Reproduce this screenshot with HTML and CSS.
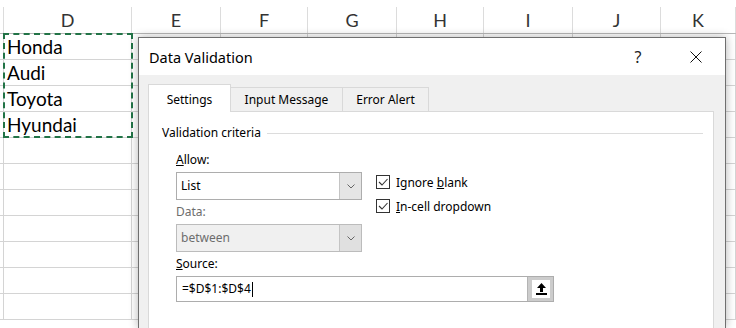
FILE: index.html
```html
<!DOCTYPE html>
<html lang="en">
<head>
    <meta charset="UTF-8">
    <title>Data Validation</title>
    <link rel="stylesheet" href="styles.css">
</head>
<body>
    <div class="sheet">
        <div class="row head">
            <div class="cell"></div>
            <div class="cell">D</div>
            <div class="cell">E</div>
            <div class="cell">F</div>
            <div class="cell">G</div>
            <div class="cell">H</div>
            <div class="cell">I</div>
            <div class="cell">J</div>
            <div class="cell">K</div>
        </div>
        <div class="row"><div class="cell"></div><div class="cell">Honda</div><div class="cell"></div><div class="cell"></div><div class="cell"></div><div class="cell"></div><div class="cell"></div><div class="cell"></div><div class="cell"></div></div>
        <div class="row"><div class="cell"></div><div class="cell">Audi</div><div class="cell"></div><div class="cell"></div><div class="cell"></div><div class="cell"></div><div class="cell"></div><div class="cell"></div><div class="cell"></div></div>
        <div class="row"><div class="cell"></div><div class="cell">Toyota</div><div class="cell"></div><div class="cell"></div><div class="cell"></div><div class="cell"></div><div class="cell"></div><div class="cell"></div><div class="cell"></div></div>
        <div class="row"><div class="cell"></div><div class="cell">Hyundai</div><div class="cell"></div><div class="cell"></div><div class="cell"></div><div class="cell"></div><div class="cell"></div><div class="cell"></div><div class="cell"></div></div>
        <div class="row"><div class="cell"></div><div class="cell"></div><div class="cell"></div><div class="cell"></div><div class="cell"></div><div class="cell"></div><div class="cell"></div><div class="cell"></div><div class="cell"></div></div>
        <div class="row"><div class="cell"></div><div class="cell"></div><div class="cell"></div><div class="cell"></div><div class="cell"></div><div class="cell"></div><div class="cell"></div><div class="cell"></div><div class="cell"></div></div>
        <div class="row"><div class="cell"></div><div class="cell"></div><div class="cell"></div><div class="cell"></div><div class="cell"></div><div class="cell"></div><div class="cell"></div><div class="cell"></div><div class="cell"></div></div>
        <div class="row"><div class="cell"></div><div class="cell"></div><div class="cell"></div><div class="cell"></div><div class="cell"></div><div class="cell"></div><div class="cell"></div><div class="cell"></div><div class="cell"></div></div>
        <div class="row"><div class="cell"></div><div class="cell"></div><div class="cell"></div><div class="cell"></div><div class="cell"></div><div class="cell"></div><div class="cell"></div><div class="cell"></div><div class="cell"></div></div>
        <div class="row"><div class="cell"></div><div class="cell"></div><div class="cell"></div><div class="cell"></div><div class="cell"></div><div class="cell"></div><div class="cell"></div><div class="cell"></div><div class="cell"></div></div>
        <div class="row"><div class="cell"></div><div class="cell"></div><div class="cell"></div><div class="cell"></div><div class="cell"></div><div class="cell"></div><div class="cell"></div><div class="cell"></div><div class="cell"></div></div>
    </div>

    <div class="copy-marquee"></div>

    <div class="dialog">
        <div class="titlebar">
            <span class="title">Data Validation</span>
            <span class="tb-btn help">?</span>
            <span class="tb-btn">
                <svg width="12" height="12" viewBox="0 0 12 12"><path d="M0.5 0.5 L11.5 11.5 M11.5 0.5 L0.5 11.5" stroke="#111" stroke-width="1" fill="none"/></svg>
            </span>
        </div>
        <div class="dlg-body">
            <div class="tabs">
                <div class="tab active">Settings</div>
                <div class="tab">Input Message</div>
                <div class="tab">Error Alert</div>
            </div>
            <div class="panel">
                <div class="group-title">
                    <span>Validation criteria</span>
                    <span class="rule"></span>
                </div>
                <div class="criteria">
                    <div class="top">
                        <div class="col">
                            <div class="label"><u>A</u>llow:</div>
                            <div class="select">
                                <span class="value">List</span>
                                <span class="drop"><svg width="8" height="5" viewBox="0 0 8 5"><path d="M0.5 0.5 L4 4 L7.5 0.5" stroke="#666" stroke-width="1" fill="none"/></svg></span>
                            </div>
                            <div class="label disabled">Data:</div>
                            <div class="select disabled">
                                <span class="value">between</span>
                                <span class="drop"><svg width="8" height="5" viewBox="0 0 8 5"><path d="M0.5 0.5 L4 4 L7.5 0.5" stroke="#666" stroke-width="1" fill="none"/></svg></span>
                            </div>
                        </div>
                        <div class="checks">
                            <div class="check-row">
                                <span class="box"><svg width="12" height="12" viewBox="0 0 12 12"><path d="M2 6 L5 9 L10.5 3" stroke="#333" stroke-width="1.1" fill="none"/></svg></span>
                                <span>Ignore <u>b</u>lank</span>
                            </div>
                            <div class="check-row">
                                <span class="box"><svg width="12" height="12" viewBox="0 0 12 12"><path d="M2 6 L5 9 L10.5 3" stroke="#333" stroke-width="1.1" fill="none"/></svg></span>
                                <span><u>I</u>n-cell dropdown</span>
                            </div>
                        </div>
                    </div>
                    <div class="label"><u>S</u>ource:</div>
                    <div class="refedit">
                        <span class="value">=$D$1:$D$4<span class="caret"></span></span>
                        <span class="collapse">
                            <span class="collapse-face">
                                <svg width="17" height="17" viewBox="0 0 17 17"><path d="M8.5 2 L13 7 L10 7 L10 11 L7 11 L7 7 L4 7 Z" fill="#000"/><rect x="3" y="12" width="11" height="2" fill="#000"/></svg>
                            </span>
                        </span>
                    </div>
                </div>
            </div>
        </div>
    </div>
</body>
</html>
```

FILE: styles.css
```css
* {
    margin: 0;
    padding: 0;
    box-sizing: border-box;
}

body {
    width: 736px;
    height: 328px;
    overflow: hidden;
    background: #fff;
    position: relative;
    font-family: "Noto Sans", "Open Sans", sans-serif;
}

/* spreadsheet */

.sheet {
    height: 328px;
    overflow: hidden;
    font-family: Lato, "Liberation Sans", sans-serif;
}

.row {
    display: grid;
    grid-template-columns: 4px 128px 89px 87px 89px 87px 89px 88px 1fr;
}

.cell {
    height: 26px;
    border-right: 1px solid #d4d4d4;
    border-bottom: 1px solid #d4d4d4;
    font-size: 19px;
    line-height: 25px;
    padding-left: 3px;
    color: #000;
    white-space: nowrap;
    overflow: hidden;
}

.head {
    padding-top: 7px;
    border-bottom: 1px solid #b8b8b8;
}

.head .cell {
    border-bottom: none;
    border-right-color: #dcdcdc;
    text-align: center;
    font-size: 18px;
    line-height: 26px;
    padding-left: 0;
    color: #333;
}

.copy-marquee {
    position: absolute;
    left: 3px;
    top: 33px;
    width: 130px;
    height: 105px;
    border: 2px dashed #217346;
}

/* dialog */

.dialog {
    position: absolute;
    left: 138px;
    top: 37px;
    width: 588px;
    height: 291px;
    overflow: hidden;
    border: 1px solid #6f6f6f;
    border-bottom: none;
    background: #f0f0f0;
    box-shadow: 0 0 9px rgba(0, 0, 0, 0.3);
    font-size: 12px;
    color: #000;
}

.titlebar {
    height: 37px;
    background: #fff;
    display: flex;
    align-items: center;
    padding-left: 10px;
}

.title {
    flex: 1;
    font-size: 14.5px;
}

.tb-btn {
    width: 58px;
    height: 37px;
    display: flex;
    align-items: center;
    justify-content: center;
}

.help {
    font-size: 16px;
    color: #222;
}

.dlg-body {
    padding: 9px 11px 0 9px;
}

.tabs {
    display: flex;
    align-items: flex-end;
    height: 27px;
}

.tab {
    height: 24px;
    line-height: 23px;
    text-align: center;
    border-top: 1px solid #d9d9d9;
    border-right: 1px solid #d9d9d9;
    background: #f0f0f0;
}

.tab:nth-child(1) { width: 83px; }
.tab:nth-child(2) { width: 112px; }
.tab:nth-child(3) { width: 86px; }

.tab.active {
    height: 28px;
    line-height: 30px;
    margin-bottom: -1px;
    border-left: 1px solid #d9d9d9;
    background: #fff;
    position: relative;
    z-index: 1;
}

.panel {
    width: 566px;
    height: 217px;
    background: #fff;
    border: 1px solid #d9d9d9;
    border-bottom: none;
    padding: 13px 10px 0 13px;
}

.group-title {
    display: flex;
    align-items: center;
    height: 16px;
    line-height: 16px;
}

.rule {
    flex: 1;
    height: 1px;
    margin-left: 6px;
    background: #dcdcdc;
}

.criteria {
    padding-left: 14px;
    margin-top: 11px;
}

.top {
    display: flex;
}

.col {
    width: 186px;
}

.label {
    height: 16px;
    line-height: 16px;
    margin-bottom: 4px;
}

.label.disabled {
    color: #6d6d6d;
}

.select {
    height: 28px;
    margin-bottom: 4px;
    border: 1px solid #adadad;
    display: flex;
    background: #fff;
}

.select .value {
    flex: 1;
    line-height: 26px;
    padding-left: 4px;
}

.select .drop {
    width: 22px;
    border-left: 1px solid #c4c4c4;
    background: #e5e5e5;
    display: flex;
    align-items: center;
    justify-content: center;
}

.select.disabled {
    background: #f0f0f0;
    border-color: #bcbcbc;
    color: #6d6d6d;
}

.select.disabled .drop {
    background: #e0e0e0;
}

.checks {
    margin-left: 14px;
    padding-top: 18px;
}

.check-row {
    height: 24px;
    display: flex;
    align-items: center;
}

.box {
    width: 14px;
    height: 14px;
    border: 1px solid #333;
    margin-right: 6px;
    display: flex;
    align-items: center;
    justify-content: center;
}

.refedit {
    width: 378px;
    height: 26px;
    border: 1px solid #adadad;
    display: flex;
}

.refedit .value {
    flex: 1;
    line-height: 24px;
    padding-left: 5px;
    display: flex;
    align-items: center;
}

.caret {
    width: 1px;
    height: 15px;
    background: #000;
    margin-left: 1px;
}

.collapse {
    width: 26px;
    background: #cccccc;
    border-left: 1px solid #b4b4b4;
    padding: 3px 3px 3px 4px;
    display: flex;
}

.collapse-face {
    flex: 1;
    background: #fff;
    display: flex;
    align-items: center;
    justify-content: center;
}
```
